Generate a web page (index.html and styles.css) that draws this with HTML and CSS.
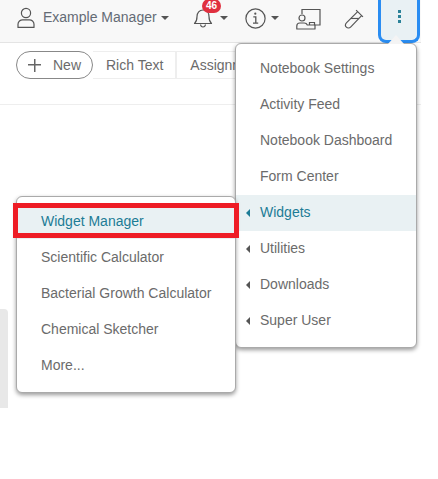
FILE: index.html
```html
<!DOCTYPE html>
<html lang="en">
<head>
  <meta charset="UTF-8" />
  <title>Notebook</title>
  <link rel="stylesheet" href="styles.css">
</head>
<body>

<div class="page">
  <header class="topbar">
    <div class="user">
      <svg class="ico-user" width="20" height="22" viewBox="0 0 20 22" fill="none" stroke="#555" stroke-width="1.2">
        <circle cx="10" cy="6" r="4.6"/>
        <path d="M2 20.4v-3.2c0-2.6 2.4-4.4 4.6-4.4h6.8c2.2 0 4.6 1.800 4.6 4.400v3.200z" stroke-linejoin="round"/>
      </svg>
      <span class="user-name">Example Manager</span>
      <span class="caret"></span>
    </div>
    <div class="bell">
      <svg width="20" height="22" viewBox="0 0 20 22" fill="none" stroke="#555" stroke-width="1.200">
        <path d="M1.500 17.500c2-1.800 2.500-3.500 2.500-7 0-3.800 2.400-6.500 6-6.500s6 2.700 6 6.500c0 3.500.5 5.200 2.500 7z" stroke-linejoin="round"/>
        <path d="M7.500 18.500c.3 1.800 1.200 2.500 2.500 2.500s2.200-.7 2.500-2.500"/>
      </svg>
      <span class="badge">46</span>
      <span class="caret"></span>
    </div>
    <div class="info">
      <svg width="21" height="21" viewBox="0 0 21 21" fill="none" stroke="#555" stroke-width="1.200">
        <circle cx="10.500" cy="10.500" r="9.600"/>
        <path d="M8.300 8.800h2.500v6.200M8 15.200h5.200" stroke-width="1.300"/>
        <circle cx="10.300" cy="5.700" r="1.100" fill="#555" stroke="none"/>
      </svg>
      <span class="caret"></span>
    </div>
    <svg class="ico-class" width="25" height="22" viewBox="0 0 25 22" fill="none" stroke="#555" stroke-width="1.200">
      <path d="M6 6V1.500h18v15.500h-5.500"/>
      <circle cx="6" cy="10" r="3"/>
      <path d="M.8 21v-3c0-2 1.500-3 3-3h4.500c1.500 0 2.500.7 3 2h7.700v4z" stroke-linejoin="round"/>
      <path d="M13.500 17v-2.500h5V17"/>
    </svg>
    <svg class="ico-flask" width="20" height="20" viewBox="0 0 19 19" fill="none" stroke="#555" stroke-width="1.100">
      <path d="M11.500 1l6.500 6.500M13 2.500L2.500 13c-1.500 1.500-1.500 3-.3 4.200s2.800 1.200 4.300-.3L16.500 6.500"/>
      <path d="M6.500 9h7.500"/>
    </svg>
    <div class="more-btn">
      <span class="dot"></span>
      <span class="dot"></span>
      <span class="dot"></span>
    </div>
  </header>

  <div class="tabs">
    <button class="new-btn"><span class="plus"></span>New</button>
    <div class="tab">Rich Text</div>
    <div class="tab">Assignment</div>
  </div>

  <div class="canvas">
    <div class="side-strip"></div>
  </div>

  <div class="menu menu-main">
    <div class="menu-item">Notebook Settings</div>
    <div class="menu-item">Activity Feed</div>
    <div class="menu-item">Notebook Dashboard</div>
    <div class="menu-item">Form Center</div>
    <div class="menu-item sub active">Widgets</div>
    <div class="menu-item sub">Utilities</div>
    <div class="menu-item sub">Downloads</div>
    <div class="menu-item sub">Super User</div>
  </div>

  <div class="menu menu-widgets">
    <div class="menu-item active">Widget Manager</div>
    <div class="menu-item">Scientific Calculator</div>
    <div class="menu-item">Bacterial Growth Calculator</div>
    <div class="menu-item">Chemical Sketcher</div>
    <div class="menu-item">More...</div>
  </div>

  <div class="highlight"></div>
</div>

</body>
</html>
```

FILE: styles.css
```css
body {
  margin: 0;
  background: white;
  font-family: "Liberation Sans", Arial, sans-serif;
  font-size: 14px;
  color: #6b6b6b;
  overflow: hidden;
}
.page {
  position: relative;
  width: 438px;
  height: 479px;
  overflow: hidden;
}
.topbar {
  width: 421px;
  height: 43px;
  box-sizing: border-box;
  background: #f8f8f8;
  border-bottom: 1px solid #e4e4e4;
  display: flex;
  align-items: center;
  padding-left: 16px;
}
.user {
  display: flex;
  align-items: center;
  width: 177px;
}
.ico-user { margin-top: -7px; }
.user-name { margin-left: 7px; margin-top: -8px; color: #646b75; }
.caret {
  display: inline-block;
  border-top: 4px solid #555;
  border-left: 4px solid transparent;
  border-right: 4px solid transparent;
  margin-left: 4px;
  margin-top: -6px;
}
.bell {
  position: relative;
  display: flex;
  align-items: center;
  width: 52px;
}
.bell svg { margin-top: -8px; }
.bell .caret { margin-left: 7px; }
.badge {
  position: absolute;
  left: 9px;
  top: -15px;
  width: 19px;
  height: 14px;
  border-radius: 8px;
  background: #e0303f;
  color: white;
  font-size: 10px;
  font-weight: bold;
  line-height: 14px;
  text-align: center;
}
.info {
  display: flex;
  align-items: center;
  width: 51px;
}
.info svg { margin-top: -6px; }
.info .caret { margin-left: 5px; }
.ico-class { margin-top: -5px; }
.ico-flask { margin-left: 23px; margin-top: -5px; }
.more-btn {
  position: relative;
  margin-left: 14px;
  width: 42px;
  height: 44px;
  margin-top: -1px;
  box-sizing: border-box;
  background: #e9f1f4;
  border: 3px solid #2a8df2;
  border-top: none;
  border-radius: 0 0 8px 8px;
  display: flex;
  flex-direction: column;
  align-items: center;
  justify-content: center;
  gap: 2px;
  padding-bottom: 6px;
}
.dot {
  width: 3px;
  height: 3px;
  background: #2b8299;
}
.tabs {
  width: 421px;
  margin-top: 8px;
  height: 28px;
  display: flex;
  align-items: stretch;
  padding-left: 16px;
  box-sizing: border-box;
}
.new-btn {
  width: 77px;
  height: 28px;
  box-sizing: border-box;
  background: white;
  border: 1px solid #888;
  border-radius: 14px;
  font: inherit;
  color: #6b6b6b;
  display: flex;
  align-items: center;
  padding: 0 0 0 11px;
}
.plus {
  position: relative;
  width: 13px;
  height: 13px;
  margin-right: 12px;
  background:
    linear-gradient(#666, #666) center / 13px 1.500px no-repeat,
    linear-gradient(#666, #666) center / 1.500px 13px no-repeat;
}
.tab {
  border-top: 1px solid #eee;
  border-bottom: 1px solid #eee;
  border-right: 2px solid #eee;
  padding: 0 12px 0 13px;
  line-height: 26px;
  white-space: nowrap;
}
.canvas {
  width: 421px;
  margin-top: 25px;
  border-top: 1px solid #eee;
  padding-top: 204px;
}
.side-strip {
  width: 8px;
  height: 99px;
  background: #e8e8e8;
  border-radius: 0 4px 0 0;
}
.menu {
  position: absolute;
  box-sizing: border-box;
  background: white;
  border: 1px solid #aaa;
  border-radius: 6px;
  box-shadow: 0 2px 4px rgba(0,0,0,0.4);
  padding: 6px 0 8px;
}
.menu-main {
  left: 235px;
  top: 43px;
  width: 182px;
  height: 305px;
  padding-top: 7px;
}
.menu-main .menu-item { line-height: 34px; }
.menu-widgets {
  left: 16px;
  top: 196px;
  width: 220px;
  height: 197px;
}
.menu-item {
  position: relative;
  height: 36px;
  line-height: 36px;
  padding-left: 24px;
  white-space: nowrap;
}
.menu-main::before {
  content: "";
  position: absolute;
  left: 152px;
  top: -9px;
  border-bottom: 9px solid #f4f4f4;
  border-left: 8px solid transparent;
  border-right: 8px solid transparent;
}
.menu-item.active {
  background: #e9f1f3;
  color: #1c7c96;
}
.sub::before {
  content: "";
  position: absolute;
  left: 10px;
  top: 14px;
  border-right: 4px solid #555;
  border-top: 4px solid transparent;
  border-bottom: 4px solid transparent;
}
.sub.active::before { border-right-color: #1c7c96; }
.highlight {
  position: absolute;
  left: 13px;
  top: 203px;
  width: 226px;
  height: 35px;
  box-sizing: border-box;
  border: 5px solid #ee1c25;
}
```
